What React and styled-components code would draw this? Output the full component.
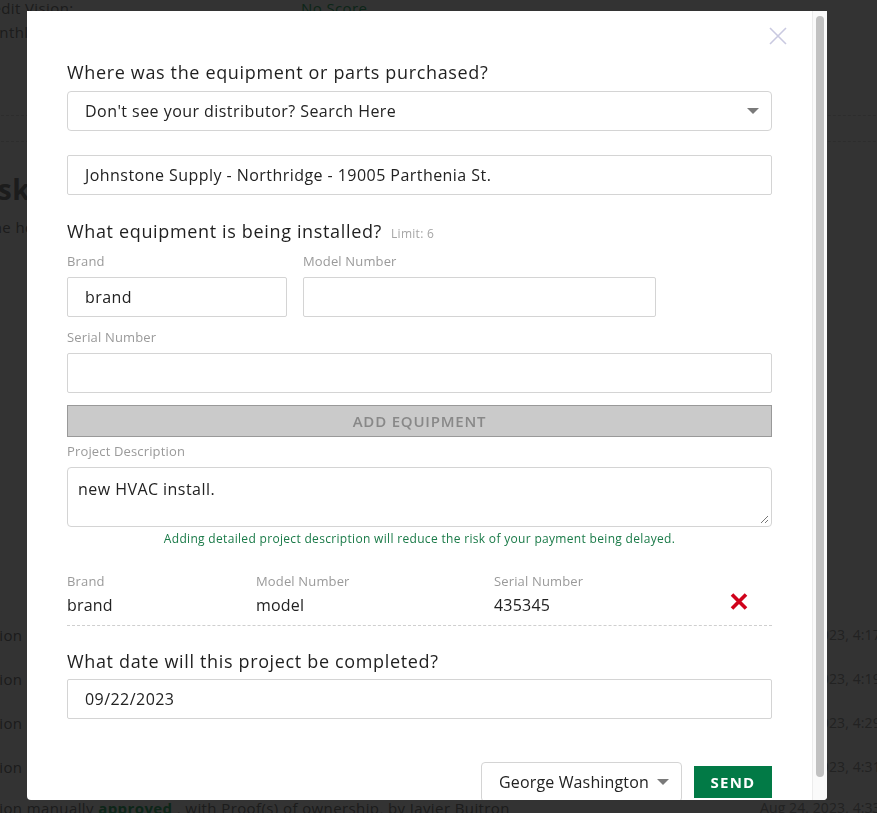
import React from "react";
import styled, { createGlobalStyle } from "styled-components";

const Global = createGlobalStyle`
  html, body { margin: 0; padding: 0; }
  body {
    background: #ffffff;
    font-family: "Open Sans", "Noto Sans", sans-serif;
    overflow: hidden;
    width: 877px;
    height: 813px;
  }
  * { box-sizing: border-box; }
`;

const FONT = `"Open Sans", "Noto Sans", sans-serif`;

/* ---------- background page ---------- */
const Page = styled.div`
  margin-left: -24px;
  width: 960px;
  color: #8a8a8a;
  font-size: 15px;
  letter-spacing: 0.4px;
`;

const InfoRow = styled.div`
  display: grid;
  grid-template-columns: 325px 1fr;
  height: 24px;
  line-height: 24px;
  margin-top: ${(p) => p.$top || 0}px;
`;

const Score = styled.span`
  color: #40b878;
`;

const Divider = styled.div`
  border-top: 1px dashed #e0e0e0;
  margin-top: ${(p) => p.$top}px;
`;

const Heading = styled.h2`
  margin: 30px 0 0 -6px;
  font-size: 28px;
  font-weight: 700;
  line-height: 34px;
  color: #8a8a8a;
`;

const Para = styled.p`
  margin: 10px 0 0 8px;
  line-height: 22px;
`;

const History = styled.div`
  margin-top: 385px;
  display: flex;
  flex-direction: column;
`;

const HistoryRow = styled.div`
  display: grid;
  grid-template-columns: 784px 1fr;
  height: ${(p) => p.$h || 44}px;
  line-height: 24px;
  flex: none;
`;

const Approved = styled.b`
  color: #40b878;
`;

const DateCell = styled.span`
  color: #a8a8a8;
  white-space: nowrap;
  font-size: 14px;
  letter-spacing: 0.1px;
`;

/* ---------- overlay + modal ---------- */
const Overlay = styled.div`
  position: fixed;
  inset: 0;
  background: rgba(0, 0, 0, 0.8);
  padding: 11px 0 0 27px;
`;

const Modal = styled.div`
  width: 800px;
  height: 789px;
  background: #fff;
  border-radius: 0 0 4px 4px;
  overflow: hidden;
  display: flex;
`;

const Scroller = styled.div`
  flex: 1;
  min-width: 0;
  overflow: hidden;
`;

const ScrollTrack = styled.div`
  width: 15px;
  flex: none;
  background: #fafafa;
  border-left: 1px solid #ececec;
  padding: 5px 3px 0 3px;
`;

const ScrollThumb = styled.div`
  height: 761px;
  border-radius: 4px;
  background: #c1c1c1;
`;

const Content = styled.div`
  position: relative;
  padding: 49px 40px 26px 40px;
  color: #222;
  font-family: ${FONT};
`;

const Close = styled.button`
  position: absolute;
  top: 16px;
  right: 25px;
  width: 18px;
  height: 18px;
  padding: 0;
  border: none;
  background: none;
  cursor: pointer;
  display: flex;
`;

const Title = styled.h3`
  margin: ${(p) => p.$top || 0}px 0 0;
  font-size: 18px;
  font-weight: 400;
  letter-spacing: 0.65px;
  line-height: 24px;
  color: #1f1f1f;
  display: flex;
  align-items: baseline;
  gap: 9px;
`;

const Limit = styled.span`
  font-size: 12px;
  letter-spacing: 0.3px;
  color: #a5a5a5;
`;

const Field = styled.div`
  margin-top: ${(p) => p.$top || 0}px;
  height: 40px;
  border: 1px solid #d4d4d4;
  border-radius: ${(p) => (p.$round ? 4 : 2)}px;
  display: flex;
  align-items: center;
  padding: 0 16px 0 17px;
  font-size: 16px;
  letter-spacing: ${(p) => (p.$ls != null ? p.$ls : 0.45)}px;
  color: #222;
  width: ${(p) => p.$w || "100%"};
  background: #fff;
`;

const SelectText = styled.span`
  flex: 1;
  white-space: nowrap;
`;

const Caret = styled.span`
  width: 0;
  height: 0;
  border-left: 6px solid transparent;
  border-right: 6px solid transparent;
  border-top: 6px solid #7a7a7a;
  margin-right: ${(p) => p.$mr || 0}px;
`;

const Label = styled.div`
  margin-top: ${(p) => p.$top || 0}px;
  font-size: 13px;
  line-height: 16px;
  letter-spacing: 0.15px;
  color: #9a9a9a;
`;

const PairRow = styled.div`
  display: grid;
  grid-template-columns: 220px 353px;
  column-gap: 16px;
  margin-top: ${(p) => p.$top || 0}px;
`;

const AddButton = styled.button`
  margin-top: 12px;
  width: 100%;
  height: 32px;
  background: #cacaca;
  border: 1px solid #999;
  color: #888;
  font-family: ${FONT};
  font-size: 15px;
  font-weight: 600;
  letter-spacing: 0.8px;
  text-transform: uppercase;
`;

const TextArea = styled.div`
  margin-top: 8px;
  height: 60px;
  border: 1px solid #d4d4d4;
  border-radius: 4px;
  padding: 11px 10px;
  font-size: 16px;
  letter-spacing: 0.45px;
  line-height: 20px;
  color: #222;
  position: relative;
`;

const Grip = styled.svg`
  position: absolute;
  right: 2px;
  bottom: 2px;
`;

const Helper = styled.div`
  margin-top: 5px;
  text-align: center;
  font-size: 12px;
  letter-spacing: 0.32px;
  line-height: 14px;
  color: #1a7a48;
`;

const EquipGrid = styled.div`
  margin-top: 27px;
  display: grid;
  grid-template-columns: 189px 238px 235px auto;
  grid-template-rows: 16px 20px;
  row-gap: 6px;
  padding-bottom: 10px;
  border-bottom: 1px dashed #cfcfcf;
  align-items: end;
`;

const Value = styled.div`
  font-size: 16px;
  letter-spacing: 0.2px;
  line-height: 20px;
  color: #222;
`;

const Remove = styled.button`
  grid-row: 1 / span 2;
  grid-column: 4;
  align-self: end;
  margin-bottom: 4px;
  padding: 0;
  border: none;
  background: none;
  display: flex;
  justify-self: start;
`;

const Footer = styled.div`
  margin-top: 43px;
  display: flex;
  justify-content: flex-end;
  align-items: flex-start;
  gap: 12px;
`;

const SendButton = styled.button`
  margin-top: 4px;
  width: 78px;
  height: 32px;
  background: #027a46;
  border: none;
  color: #fff;
  font-family: ${FONT};
  font-size: 15px;
  font-weight: 700;
  letter-spacing: 1.2px;
`;

export default function App() {
  const rows = [
    ["4:17", 44],
    ["4:19", 44],
    ["4:29", 44],
    ["4:31", 41],
  ];
  return (
    <>
      <Global />
      <Page>
        <InfoRow $top={-4}>
          <span>Credit Vision:</span>
          <Score>No Score</Score>
        </InfoRow>
        <InfoRow>
          <span>Monthly Payment:</span>
          <span />
        </InfoRow>
        <Divider $top={71} />
        <Divider $top={25} />
        <Heading>Risk-Free Installation</Heading>
        <Para>The homeowner has been notified</Para>
        <History>
          {rows.map(([t, h]) => (
            <HistoryRow key={t} $h={h}>
              <span>Action submitted</span>
              <DateCell>Aug 24, 2023, {t} PM</DateCell>
            </HistoryRow>
          ))}
          <HistoryRow $h={30}>
            <span>
              Action manually <Approved>approved</Approved> , with Proof(s) of ownership, by Javier Buitron
            </span>
            <DateCell>Aug 24, 2023, 4:33 PM</DateCell>
          </HistoryRow>
        </History>
      </Page>

      <Overlay>
        <Modal>
          <Scroller>
            <Content>
              <Close aria-label="Close">
                <svg width="18" height="18" viewBox="0 0 18 18">
                  <path d="M1 1 L17 17 M17 1 L1 17" stroke="#c9c9e0" strokeWidth="1.6" fill="none" />
                </svg>
              </Close>

              <Title>Where was the equipment or parts purchased?</Title>
              <Field $top={7} $round>
                <SelectText>Don't see your distributor? Search Here</SelectText>
                <Caret $mr={-4} />
              </Field>
              <Field $top={24}>Johnstone Supply - Northridge - 19005 Parthenia St.</Field>

              <Title $top={24}>
                What equipment is being installed?<Limit>Limit: 6</Limit>
              </Title>
              <PairRow $top={7}>
                <Label>Brand</Label>
                <Label>Model Number</Label>
              </PairRow>
              <PairRow $top={8}>
                <Field>brand</Field>
                <Field />
              </PairRow>
              <Label $top={12}>Serial Number</Label>
              <Field $top={8} />
              <AddButton>Add Equipment</AddButton>

              <Label $top={6}>Project Description</Label>
              <TextArea>
                new HVAC install.
                <Grip width="10" height="10" viewBox="0 0 10 10">
                  <path d="M9 2 L2 9 M9 6 L6 9" stroke="#777" strokeWidth="1" fill="none" />
                </Grip>
              </TextArea>
              <Helper>Adding detailed project description will reduce the risk of your payment being delayed.</Helper>

              <EquipGrid>
                <Label>Brand</Label>
                <Label>Model Number</Label>
                <Label>Serial Number</Label>
                <Value>brand</Value>
                <Value>model</Value>
                <Value>435345</Value>
                <Remove aria-label="Remove">
                  <svg width="20" height="19" viewBox="0 0 20 19">
                    <path d="M3 2.5 L17 16.5 M17 2.5 L3 16.5" stroke="#d0021b" strokeWidth="3.6" fill="none" />
                  </svg>
                </Remove>
              </EquipGrid>

              <Title $top={23}>What date will this project be completed?</Title>
              <Field $top={6}>09/22/2023</Field>

              <Footer>
                <Field $w="201px" $round $ls={0.15}>
                  <SelectText>George Washington</SelectText>
                  <Caret $mr={-4} />
                </Field>
                <SendButton>SEND</SendButton>
              </Footer>
            </Content>
          </Scroller>
          <ScrollTrack>
            <ScrollThumb />
          </ScrollTrack>
        </Modal>
      </Overlay>
    </>
  );
}
